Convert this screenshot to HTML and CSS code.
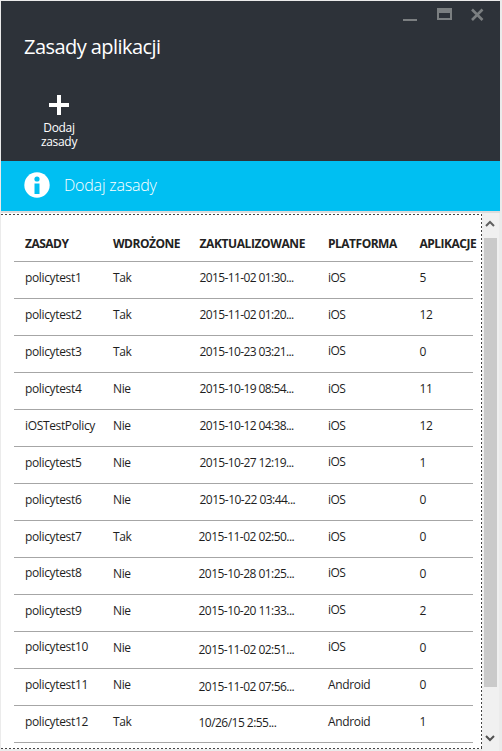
FILE: index.html
```html
<!DOCTYPE html>
<html lang="pl">
<head>
<meta charset="utf-8">
<title>Zasady aplikacji</title>
<link rel="stylesheet" href="styles.css">
</head>
<body>
<div class="blade">
  <header class="header">
    <div class="controls">
      <svg width="82" height="14" viewBox="0 0 82 14">
        <path d="M0 11h14v2H0z" fill="#7b7f81"/>
        <path fill-rule="evenodd" d="M34 0h15v12H34zM36 5v5h11V5z" fill="#7b7f81"/>
        <path d="M69 1.500l10.500 10.500M79.500 1.500L69 12" stroke="#7b7f81" stroke-width="2.600" fill="none"/>
      </svg>
    </div>
    <h1 class="title">Zasady aplikacji</h1>
    <div class="command">
      <svg width="20" height="20" viewBox="0 0 20 20"><path d="M8 0h4v8h8v4h-8v8H8v-8H0V8h8z" fill="#fff"/></svg>
      <span>Dodaj<br>zasady</span>
    </div>
  </header>
  <div class="banner">
    <svg width="26" height="26" viewBox="0 0 26 26">
      <circle cx="13" cy="13" r="12.700" fill="#fff"/>
      <circle cx="13" cy="7" r="2.600" fill="#00bff2"/>
      <path d="M10.500 11.500h5V22h-5z" fill="#00bff2"/>
    </svg>
    <span>Dodaj zasady</span>
  </div>
  <div class="body">
    <main class="list">
      <div class="row head"><b>ZASADY</b><b>WDROŻONE</b><b class="updated">ZAKTUALIZOWANE</b><b>PLATFORMA</b><b>APLIKACJE</b></div>
      <div class="row"><span>policytest1</span><span>Tak</span><span class="date">2015-11-02 01:30...</span><span class="os">iOS</span><span>5</span></div>
      <div class="row"><span>policytest2</span><span>Tak</span><span class="date">2015-11-02 01:20...</span><span class="os">iOS</span><span>12</span></div>
      <div class="row"><span>policytest3</span><span>Tak</span><span class="date">2015-10-23 03:21...</span><span class="os raised">iOS</span><span>0</span></div>
      <div class="row"><span>policytest4</span><span>Nie</span><span class="date">2015-10-19 08:54...</span><span class="os">iOS</span><span>11</span></div>
      <div class="row"><span>iOSTestPolicy</span><span>Nie</span><span class="date">2015-10-12 04:38...</span><span class="os">iOS</span><span>12</span></div>
      <div class="row"><span>policytest5</span><span>Nie</span><span class="date">2015-10-27 12:19...</span><span class="os raised">iOS</span><span>1</span></div>
      <div class="row"><span>policytest6</span><span>Nie</span><span class="date wide">2015-10-22 03:44...</span><span class="os">iOS</span><span>0</span></div>
      <div class="row"><span>policytest7</span><span>Tak</span><span class="date wide out">2015-11-02 02:50...</span><span class="os">iOS</span><span>0</span></div>
      <div class="row"><span class="raised">policytest8</span><span>Nie</span><span class="date wide out">2015-10-28 01:25...</span><span class="os raised">iOS</span><span>0</span></div>
      <div class="row"><span>policytest9</span><span>Nie</span><span class="date wide out">2015-10-20 11:33...</span><span class="os raised">iOS</span><span>2</span></div>
      <div class="row"><span class="raised">policytest10</span><span>Nie</span><span class="date wide out lowered">2015-11-02 02:51...</span><span class="os raised">iOS</span><span>0</span></div>
      <div class="row"><span>policytest11</span><span>Nie</span><span class="date wide out lowered">2015-11-02 07:56...</span><span>Android</span><span>0</span></div>
      <div class="row"><span>policytest12</span><span>Tak</span><span class="date wide out lowered-slight">10/26/15 2:55...</span><span>Android</span><span>1</span></div>
    </main>
    <div class="scrollbar">
      <svg width="10" height="7" viewBox="0 0 10 7"><path d="M1 6l4-4 4 4" fill="none" stroke="#606060" stroke-width="2"/></svg>
      <div class="thumb"></div>
      <svg width="10" height="7" viewBox="0 0 10 7"><path d="M1 1l4 4 4-4" fill="none" stroke="#505050" stroke-width="2"/></svg>
    </div>
  </div>
</div>
</body>
</html>
```
FILE: styles.css
```css
* { box-sizing: border-box; }
body {
  margin: 0;
  background: #ebebeb;
  font-family: "Open Sans", "Noto Sans", sans-serif;
  color: #1e1e1e;
}
svg { display: block; flex: none; }
.blade {
  width: 502px;
  height: 751px;
  padding: 1px 2px 0 1px;
  display: flex;
  flex-direction: column;
}
.header {
  height: 160px;
  background: #2d3239;
  color: #fff;
}
.controls {
  display: flex;
  justify-content: flex-end;
  padding: 7px 15px 0 0;
}
.title {
  margin: 10px 0 0 23px;
  font-size: 20px;
  line-height: 30px;
  font-weight: 400;
  letter-spacing: -0.55px;
}
.command {
  width: 70px;
  margin: 33px 0 0 23px;
  display: flex;
  flex-direction: column;
  align-items: center;
  gap: 6px;
  font-size: 12px;
  line-height: 14px;
  text-align: center;
  letter-spacing: -0.3px;
}
.banner {
  height: 50px;
  padding: 0 0 3px 23px;
  display: flex;
  align-items: center;
  gap: 14px;
  background: #00bff2;
  color: #fff;
  font-size: 16px;
  font-weight: 300;
  letter-spacing: -0.2px;
}
.body {
  flex: 1;
  min-height: 0;
  display: flex;
  border-top: 2px solid #dcdcdc;
}
.list {
  width: 481px;
  height: 536px;
  padding: 12px 0 0 13px;
  background:
    repeating-linear-gradient(90deg, #444 0 2px, #fff 2px 4px) 0 1px / 100% 1px no-repeat,
    repeating-linear-gradient(90deg, #444 0 2px, #fff 2px 4px) 0 100% / 100% 1px no-repeat,
    repeating-linear-gradient(180deg, #444 0 2px, #fff 2px 4px) 100% 1px / 1px 100% no-repeat,
    #fff;
}
.row {
  width: 459px;
  height: 37px;
  padding: 0 0 4px 11px;
  display: grid;
  grid-template-columns: 88px 86.500px 128.500px 91.500px 1fr;
  align-items: center;
  border-bottom: 1px solid #a6a6a6;
  font-size: 12px;
  line-height: 16px;
  letter-spacing: -0.35px;
  white-space: nowrap;
}
.head { padding-top: 2px; padding-bottom: 0; letter-spacing: -0.5px; color: #222; }
.head .updated { letter-spacing: -0.4px; }
.date { letter-spacing: -0.62px; }
.wide { letter-spacing: -0.53px; }
.out { margin-left: -1px; }
.os { letter-spacing: -0.5px; }
.raised { padding-bottom: 2px; }
.lowered { padding-top: 4px; }
.lowered-slight { padding-top: 2px; }
.scrollbar {
  width: 17px;
  height: 538px;
  padding: 7px 3px 9px 2px;
  display: flex;
  flex-direction: column;
  align-items: center;
  background: #f0f0f0;
}
.thumb {
  width: 13px;
  height: 449px;
  margin: 11px 0 auto;
  background: #cacaca;
}
```
